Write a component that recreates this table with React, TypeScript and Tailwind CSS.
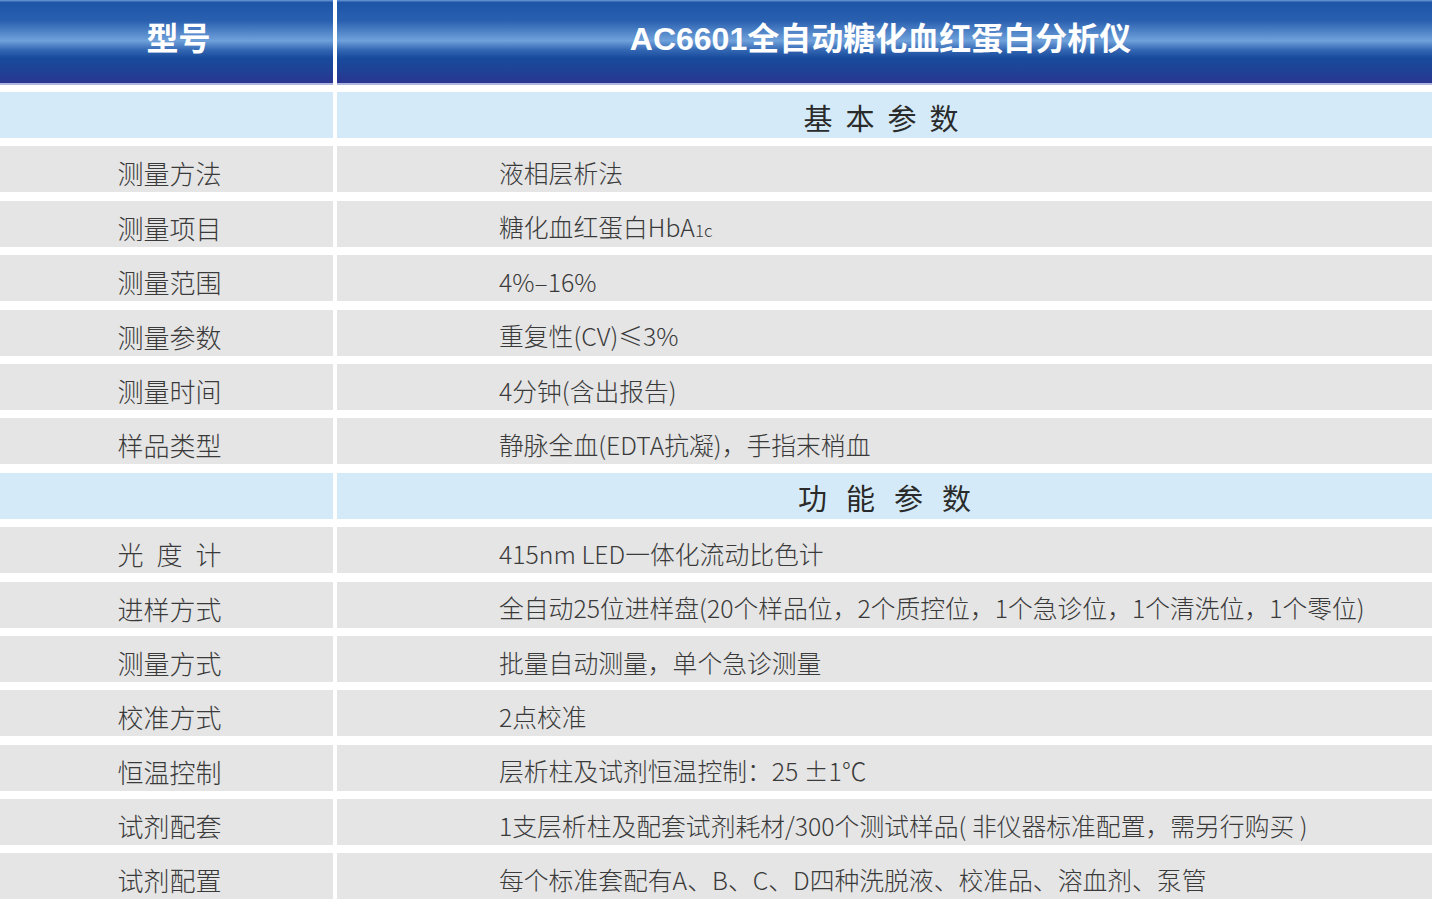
import React from "react";

const font = { fontFamily: '"Noto Sans CJK SC", "Noto Sans", sans-serif' };
const headFont = { fontFamily: '"Liberation Sans", "Noto Sans CJK SC", sans-serif' };

type Row = { label: React.ReactNode; value: React.ReactNode; spaced?: boolean };

const basic: Row[] = [
  { label: "测量方法", value: "液相层析法" },
  {
    label: "测量项目",
    value: (
      <>
        糖化血红蛋白HbA<span className="text-[17px]">1c</span>
      </>
    ),
  },
  { label: "测量范围", value: "4%–16%" },
  { label: "测量参数", value: "重复性(CV)≤3%" },
  { label: "测量时间", value: "4分钟(含出报告)" },
  { label: "样品类型", value: "静脉全血(EDTA抗凝)，手指末梢血" },
];

const func: Row[] = [
  { label: "光度计", value: "415nm LED一体化流动比色计", spaced: true },
  {
    label: "进样方式",
    value: "全自动25位进样盘(20个样品位，2个质控位，1个急诊位，1个清洗位，1个零位)",
  },
  { label: "测量方式", value: "批量自动测量，单个急诊测量" },
  { label: "校准方式", value: "2点校准" },
  { label: "恒温控制", value: "层析柱及试剂恒温控制：25 ±1℃" },
  {
    label: "试剂配套",
    value: "1支层析柱及配套试剂耗材/300个测试样品( 非仪器标准配置，需另行购买 )",
  },
  { label: "试剂配置", value: "每个标准套配有A、B、C、D四种洗脱液、校准品、溶血剂、泵管" },
];

function DataRow({ r }: { r: Row }) {
  return (
    <div className="flex h-[46px] gap-[4px]">
      <div className="flex w-[333px] shrink-0 items-center justify-center bg-[#e5e5e5] pl-[6px] pt-[8px]">
        <span
          className={
            "text-[26px] font-light leading-none text-[#3a3a3a] " +
            (r.spaced ? "tracking-[13px] pl-[13px]" : "")
          }
        >
          {r.label}
        </span>
      </div>
      <div className="flex flex-1 items-center bg-[#e5e5e5] pl-[162px] pt-[6px]">
        <span className="whitespace-nowrap text-[24.8px] font-light leading-none text-[#3a3a3a]">
          {r.value}
        </span>
      </div>
    </div>
  );
}

function SectionRow({ title, track }: { title: string; track: string }) {
  return (
    <div className="flex h-[46px] gap-[4px]">
      <div className="w-[333px] shrink-0 bg-[#d4eaf8]" />
      <div className="flex flex-1 items-center justify-center bg-[#d4eaf8] pt-[4px]">
        <span className={"text-[29px] leading-none text-[#2a2a2a] " + track}>{title}</span>
      </div>
    </div>
  );
}

export default function App() {
  const headerBg =
    "bg-[linear-gradient(180deg,#6b9ad6_0%,#1f55a7_3%,#2a60b0_25%,#6fa1da_49%,#3468b4_60%,#184a9c_70%,#1f4296_85%,#2b3590_100%)]";
  return (
    <div className="h-[901px] w-[1432px] overflow-hidden bg-white" style={font}>
      <div className="flex h-[85px] gap-[4px]">
        <div
          className={
            "flex w-[333px] shrink-0 items-center justify-center border-b-[2px] border-[#aeb6e0] pl-[24px] " +
            headerBg
          }
        >
          <span className="pb-[6px] text-[32px] font-bold leading-none text-white" style={headFont}>
            型号
          </span>
        </div>
        <div
          className={
            "flex flex-1 items-center justify-center border-b-[2px] border-[#aeb6e0] pr-[8px] " +
            headerBg
          }
        >
          <span className="pb-[6px] text-[32px] font-bold leading-none text-white" style={headFont}>
            AC6601全自动糖化血红蛋白分析仪
          </span>
        </div>
      </div>
      <div className="mt-[7px] flex flex-col gap-[8.4px]">
        <SectionRow title="基本参数" track="tracking-[13px] pl-[6px]" />
        {basic.map((r, i) => (
          <DataRow key={"b" + i} r={r} />
        ))}
        <SectionRow title="功能参数" track="tracking-[19px] pl-[19px]" />
        {func.map((r, i) => (
          <DataRow key={"f" + i} r={r} />
        ))}
      </div>
    </div>
  );
}
